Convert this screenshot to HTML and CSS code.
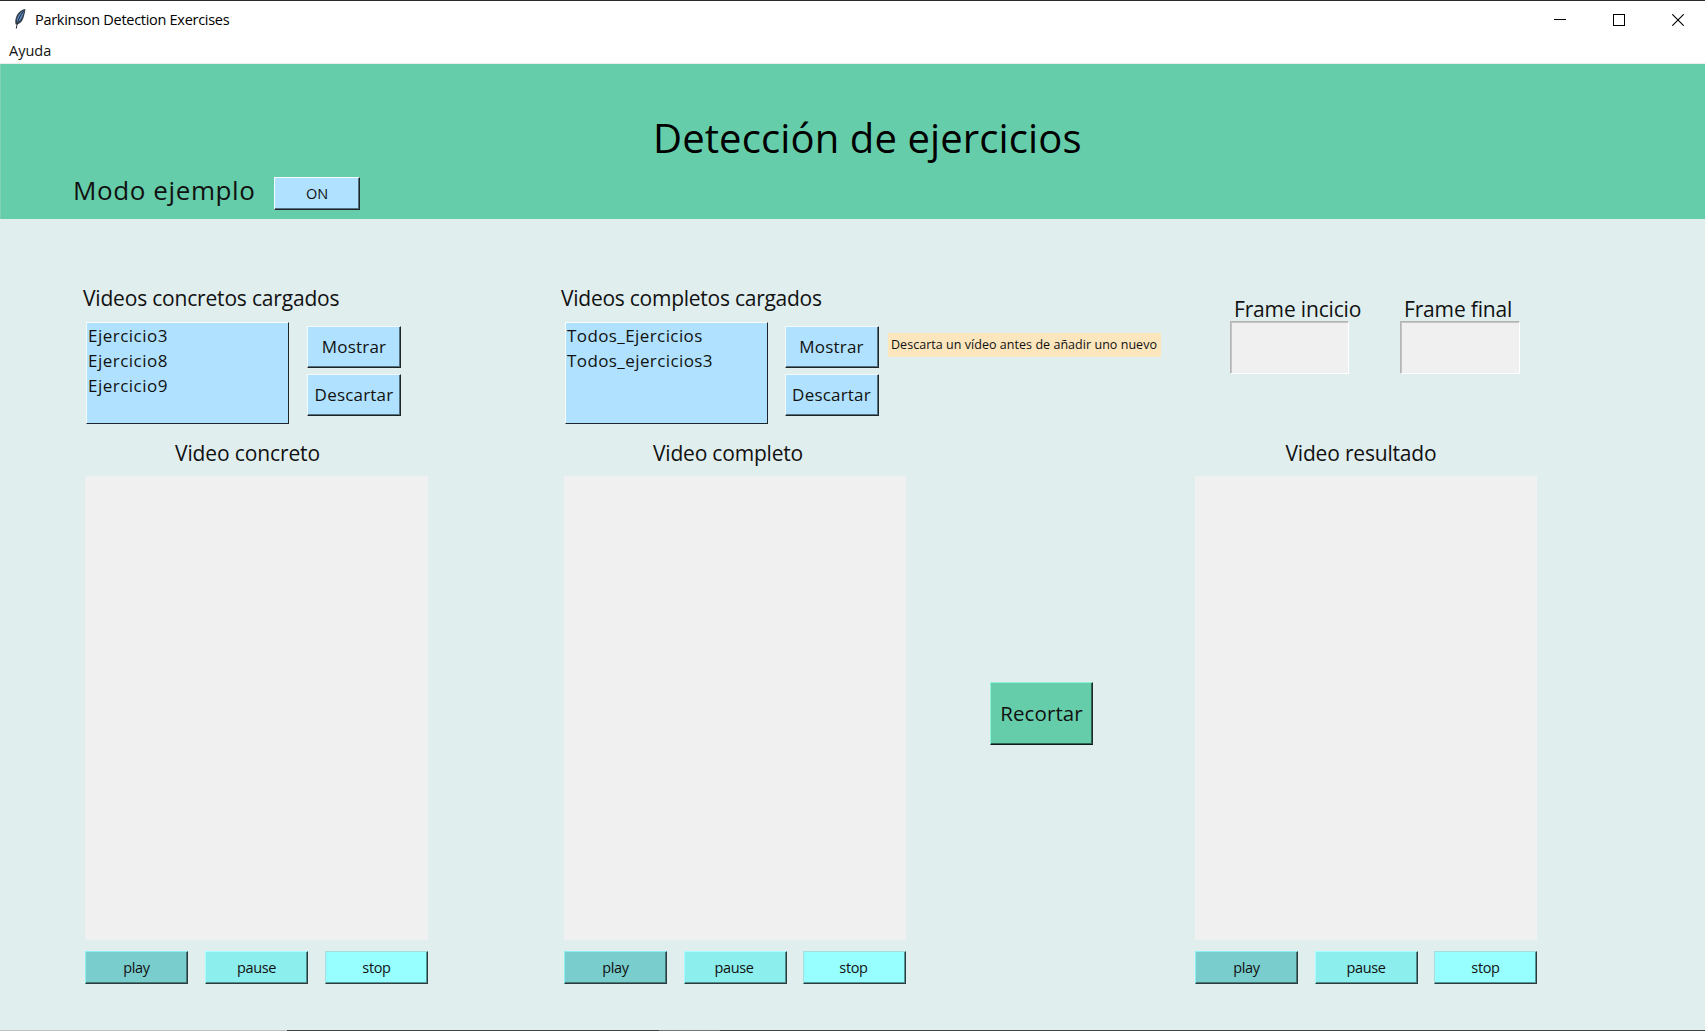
FILE: index.html
```
<!DOCTYPE html>
<html lang="es">
<head>
<meta charset="utf-8">
<title>Parkinson Detection Exercises</title>
<link rel="stylesheet" href="styles.css">
</head>
<body>
<div class="window">
  <div class="titlebar">
    <svg class="feather" width="14" height="22" viewBox="0 0 14 22">
      <path d="M12.3 1 C8 1.500 4.500 5 3 9.500 C2 12.500 2 14.500 2.700 16.500 L4.500 16.500 C8.500 15 10 12 11 8 C11.600 5.500 12.500 3.500 12.300 1Z" fill="#38424f"/>
      <path d="M11.500 2 C8 4 5.500 7 4.100 11 L4 15 C7.500 12.500 9 9.500 10 6Z" fill="#5f93d0"/>
      <path d="M11 2.500 C7.500 7 4.500 12 3.300 20.500" fill="none" stroke="#1c2430" stroke-width="1"/>
    </svg>
    <span class="caption">Parkinson Detection Exercises</span>
    <div class="controls">
      <svg width="12" height="12" viewBox="0 0 12 12"><path d="M0 5.500H12" stroke="#000"/></svg>
      <svg width="12" height="12" viewBox="0 0 12 12"><rect x=".5" y=".5" width="11" height="11" fill="none" stroke="#000"/></svg>
      <svg width="12" height="12" viewBox="0 0 12 12"><path d="M.3 .3L11.700 11.700M11.700 .3L.3 11.700" stroke="#000" stroke-width="1.100"/></svg>
    </div>
  </div>
  <div class="menubar"><span>Ayuda</span></div>

  <header class="banner">
    <h1>Detección de ejercicios</h1>
    <div class="mode">
      <span class="mode-label">Modo ejemplo</span>
      <button class="btn mode-btn">ON</button>
    </div>
  </header>

  <main class="content">
    <section class="column">
      <h2 class="list-title concrete-title">Videos concretos cargados</h2>
      <div class="picker">
        <ul class="listbox"><li>Ejercicio3</li><li>Ejercicio8</li><li>Ejercicio9</li></ul>
        <div class="actions">
          <button class="btn action">Mostrar</button>
          <button class="btn action">Descartar</button>
        </div>
      </div>
      <h2 class="video-title concrete-video">Video concreto</h2>
      <div class="screen"></div>
      <div class="player">
        <button class="btn play">play</button>
        <button class="btn pause">pause</button>
        <button class="btn stop">stop</button>
      </div>
    </section>

    <section class="column complete">
      <h2 class="list-title complete-title">Videos completos cargados</h2>
      <div class="picker">
        <ul class="listbox todos"><li>Todos_Ejercicios</li><li>Todos_ejercicios3</li></ul>
        <div class="actions">
          <button class="btn action">Mostrar</button>
          <button class="btn action">Descartar</button>
        </div>
        <div class="notice">Descarta un vídeo antes de añadir uno nuevo</div>
      </div>
      <h2 class="video-title complete-video">Video completo</h2>
      <div class="screen"></div>
      <div class="player">
        <button class="btn play">play</button>
        <button class="btn pause">pause</button>
        <button class="btn stop">stop</button>
      </div>
    </section>

    <button class="btn crop">Recortar</button>

    <section class="column result">
      <div class="frames">
        <label class="frame">Frame incicio<input class="start" type="text"></label>
        <label class="frame">Frame final<input class="end" type="text"></label>
      </div>
      <h2 class="video-title result-video">Video resultado</h2>
      <div class="screen"></div>
      <div class="player">
        <button class="btn play">play</button>
        <button class="btn pause">pause</button>
        <button class="btn stop">stop</button>
      </div>
    </section>
  </main>
  <footer class="edge"></footer>
</div>
</body>
</html>
```
FILE: styles.css
```
* { box-sizing: border-box; }
body {
  margin: 0;
  font-family: "Open Sans", "Noto Sans", sans-serif;
  color: #111;
  background: #e0eeee;
}
h1, h2, ul { margin: 0; padding: 0; font-weight: 400; list-style: none; }
.window { width: 1705px; height: 1031px; display: flex; flex-direction: column; overflow: hidden; }

.titlebar {
  height: 38px;
  border-top: 1px solid #2b2b2b;
  background: #fff;
  display: flex;
  align-items: center;
  padding: 0 21px 0 13px;
  flex: none;
}
.feather { margin-bottom: 1px; }
.caption { margin-left: 8px; font-size: 14.5px; letter-spacing: -.285px; color: #000; }
.controls { display: flex; gap: 47px; margin-left: auto; }
.menubar {
  height: 26px;
  flex: none;
  background: #fff;
  border-bottom: 1px solid #ececec;
  padding-left: 9px;
  font-size: 14.5px;
  line-height: 26px;
}

.banner { height: 155px; flex: none; background: #66cdaa; padding-top: 44px; border-left: 1px solid #7fd2b5; }
.banner h1 { font-size: 40px; line-height: 60px; padding-left: 652px; letter-spacing: .12px; color: #000; }
.mode { display: flex; align-items: flex-start; padding: 9px 0 0 72px; }
.mode-label { font-size: 26px; line-height: 26px; letter-spacing: .6px; width: 201px; }

.btn {
  appearance: none;
  border: 1px solid;
  border-color: #f4fbff #1d2528 #1d2528 #f4fbff;
  border-radius: 0;
  box-shadow: inset -1px -1px 0 #54707f;
  background: #b0e2ff;
  color: #111;
  font-family: inherit;
  padding: 0 0 1px;
  flex: none;
}
.mode-btn { width: 86px; height: 33px; font-size: 14.5px; }

.content { flex: 1; display: flex; padding: 65px 0 0 85px; }
.column { width: 343px; flex: none; display: flex; flex-direction: column; }
.complete { margin-left: 136px; width: 342px; }
.list-title { font-size: 21px; line-height: 29px; height: 38px; white-space: nowrap; }
.concrete-title { margin-left: -2px; letter-spacing: -.188px; }
.complete-title { margin-left: -3px; letter-spacing: -.253px; }
.picker { display: flex; height: 117px; margin-left: 1px; }
.listbox {
  width: 203px;
  height: 102px;
  flex: none;
  background: #b0e2ff;
  border: 1px solid;
  border-color: #f7fcfd #1d2528 #1d2528 #f7fcfd;
  padding-left: 1px;
  font-size: 17px;
  line-height: 25px;
  letter-spacing: .48px;
}
.todos { letter-spacing: .41px; }
.actions { display: flex; flex-direction: column; gap: 6px; padding-top: 4px; margin-left: 18px; }
.complete .actions { margin-left: 17px; }
.action { width: 94px; height: 42px; font-size: 17px; letter-spacing: .2px; }
.complete .action { padding-right: 1px; }
.notice {
  flex: none;
  margin: 11px 0 0 9px;
  width: 273px;
  height: 24px;
  background: #fce6be;
  font-size: 12.5px;
  line-height: 23px;
  letter-spacing: .04px;
  padding-left: 3px;
  white-space: nowrap;
}
.video-title { height: 37px; font-size: 21px; line-height: 28px; text-align: center; }
.concrete-video { padding-right: 18px; letter-spacing: -.118px; }
.complete-video { padding-right: 14px; letter-spacing: -.2px; }
.result-video { padding-right: 10px; letter-spacing: -.187px; }
.screen { height: 464px; background: #f0f0f0; }
.player { display: flex; justify-content: space-between; padding-top: 11px; }
.player .btn { width: 103px; height: 33px; font-size: 14.5px; letter-spacing: -.35px; }
.complete .player .pause, .complete .player .stop { padding-right: 2px; }
.player .play { background: #79cdcd; border-color: #8cf0f0 #2a3c3e #2a3c3e #8cf0f0; box-shadow: inset -1px -1px 0 #477878; }
.player .pause { background: #8deeee; border-color: #a8ffff #2a3c3e #2a3c3e #a8ffff; box-shadow: inset -1px -1px 0 #528b8b; }
.player .stop { background: #97ffff; border-color: #a6dede #2a3c3e #2a3c3e #a6dede; box-shadow: inset -1px -1px 0 #579696; }

.crop {
  margin: 398px 0 0 84px;
  width: 103px;
  height: 63px;
  align-self: flex-start;
  background: #66cdaa;
  border-color: #8ff5d5 #1d2e29 #101a17 #8ff5d5;
  box-shadow: inset -1px -1px 0 #2f6353;
  font-size: 20.5px;
  letter-spacing: .1px;
  padding-bottom: 2px;
}

.result { margin-left: 102px; width: 342px; }
.frames { display: flex; height: 155px; padding: 12px 0 0 35px; }
.frame { width: 170px; flex: none; display: flex; flex-direction: column; font-size: 21px; line-height: 27px; letter-spacing: -.16px; padding-left: 4px; white-space: nowrap; }
.frame input {
  width: 119px;
  height: 53px;
  margin: -2px 0 0 -4px;
  border: 1px solid;
  border-color: #b4b4b4 #fff #fff #b4b4b4;
  box-shadow: inset 1px 1px 0 #c4c4c4;
  background: #f0f0f0;
  border-radius: 0;
}
.frame .end { width: 120px; }

.edge { height: 1px; flex: none; background: linear-gradient(to right, #bdc4c4 0 287px, #3b4242 287px 659px, #707777 659px 720px, #3b4242 720px); }
```
